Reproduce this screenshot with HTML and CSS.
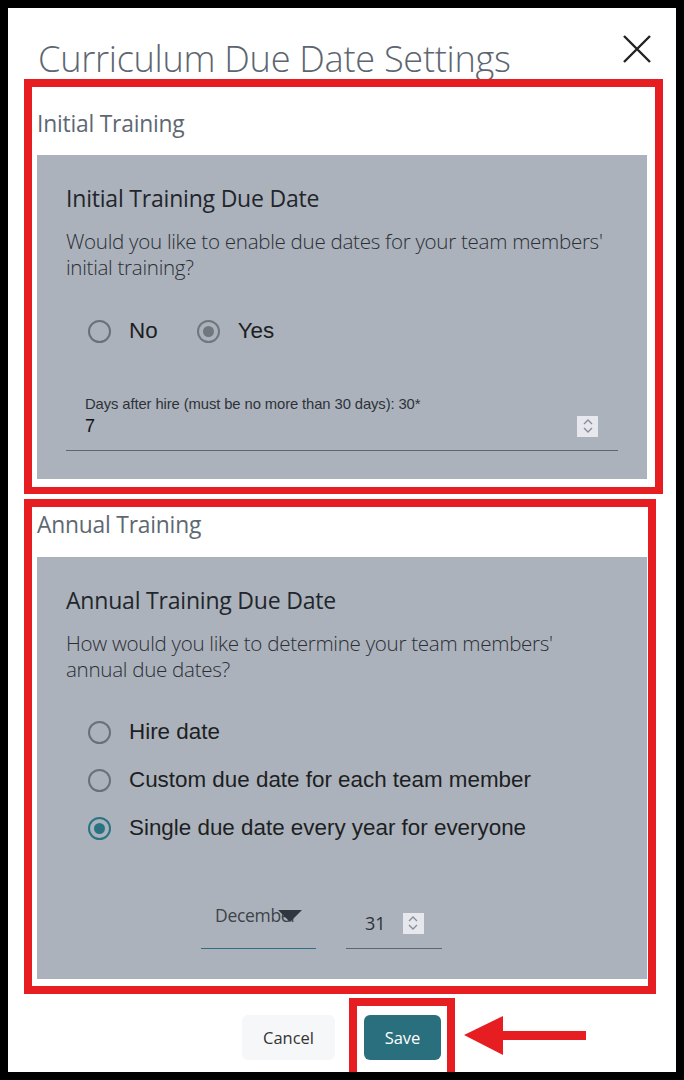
FILE: index.html
```html
<!DOCTYPE html>
<html>
<head>
<meta charset="utf-8">
<link rel="stylesheet" href="styles.css">
</head>
<body>
<div class="dialog">
  <div class="header">
    <h1 class="title">Curriculum Due Date Settings</h1>
    <svg class="close" width="30" height="30" viewBox="0 0 30 30"><path d="M2 2 L28 28 M28 2 L2 28" stroke="#222" stroke-width="2.4" fill="none"/></svg>
  </div>

  <div class="mark mark-one">
    <div class="section-label">Initial Training</div>
    <div class="panel panel-one">
      <h2 class="panel-title">Initial Training Due Date</h2>
      <p class="question">Would you like to enable due dates for your team members'<br>initial training?</p>
      <div class="radio-row">
        <label class="radio"><span class="dot"></span><span class="rlabel">No</span></label>
        <label class="radio"><span class="dot checked-gray"></span><span class="rlabel">Yes</span></label>
      </div>
      <div class="field">
        <div class="field-label">Days after hire (must be no more than 30 days): 30*</div>
        <div class="field-row">
          <span class="field-value">7</span>
          <span class="spin"><svg width="12" height="16" viewBox="0 0 12 16"><path d="M2 6 L6 2 L10 6 M2 10 L6 14 L10 10" stroke="#8a8d9a" stroke-width="1.4" fill="none"/></svg></span>
        </div>
      </div>
    </div>
  </div>

  <div class="mark mark-two">
    <div class="section-label">Annual Training</div>
    <div class="panel panel-two">
      <h2 class="panel-title">Annual Training Due Date</h2>
      <p class="question">How would you like to determine your team members'<br>annual due dates?</p>
      <div class="radio-col">
        <label class="radio"><span class="dot"></span><span class="rlabel">Hire date</span></label>
        <label class="radio"><span class="dot"></span><span class="rlabel">Custom due date for each team member</span></label>
        <label class="radio"><span class="dot checked-teal"></span><span class="rlabel">Single due date every year for everyone</span></label>
      </div>
      <div class="date-row">
        <div class="select">
          <span class="select-text">December</span>
          <span class="caret"></span>
        </div>
        <div class="day">
          <span class="day-value">31</span>
          <span class="spin"><svg width="12" height="16" viewBox="0 0 12 16"><path d="M2 6 L6 2 L10 6 M2 10 L6 14 L10 10" stroke="#8a8d9a" stroke-width="1.4" fill="none"/></svg></span>
        </div>
      </div>
    </div>
  </div>

  <div class="footer">
    <button class="btn cancel">Cancel</button>
    <div class="save-mark"><button class="btn save">Save</button></div>
    <svg class="arrow" width="122" height="40" viewBox="0 0 122 40"><polygon points="0,19 39,0 39,15 122,15 122,24 39,24 39,39" fill="#e61e22"/></svg>
  </div>
</div>
</body>
</html>
```

FILE: styles.css
```css
* { box-sizing: border-box; }
html, body { margin: 0; padding: 0; }
body {
  background: #000;
  padding: 8px;
  width: 684px;
  height: 1080px;
  font-family: "Open Sans", "Liberation Sans", sans-serif;
}
.dialog {
  background: #fff;
  width: 668px;
  height: 1064px;
  padding: 0 0 0 16px;
  display: flex;
  flex-direction: column;
}
.header {
  display: flex;
  justify-content: space-between;
  align-items: flex-start;
  height: 71px;
  padding-left: 14px;
  padding-right: 24px;
}
.title {
  margin: 0;
  margin-top: 26px;
  font-weight: 300;
  font-size: 36.2px;
  line-height: 48px;
  color: #5d6670;
  letter-spacing: -0.3px;
}
.close { margin-top: 26px; }

.mark {
  border: 8px solid #e61e22;
  padding-left: 5px;
}
.mark-one {
  width: 639px;
  padding-bottom: 8px;
  border-bottom-width: 7px;
}
.mark-two {
  width: 632px;
  margin-top: 5px;
  padding-bottom: 7px;
}
.section-label {
  font-size: 22.8px;
  color: #5e6872;
  font-weight: 400;
  letter-spacing: -0.2px;
}
.mark-one .section-label { height: 68px; padding-top: 22px; line-height: 30px; }
.mark-two .section-label { height: 50px; padding-top: 3px; line-height: 30px; }

.panel {
  width: 610px;
  background: #abb2bc;
  padding: 28px 0 0 29px;
}
.panel-one { height: 324px; }
.panel-two { height: 422px; }
.panel-title {
  margin: 0;
  font-size: 23px;
  font-weight: 400;
  line-height: 30px;
  color: #22262b;
  letter-spacing: -0.2px;
}
.question {
  margin: 15px 0 0;
  font-size: 20.6px;
  font-weight: 300;
  line-height: 26px;
  color: #2b2f35;
  letter-spacing: -0.3px;
  white-space: nowrap;
}
.radio {
  display: flex;
  align-items: center;
  gap: 18px;
  font-family: "Liberation Sans", Arial, sans-serif;
  font-size: 22.4px;
  color: #1d1f22;
  height: 24px;
}
.dot {
  width: 23px;
  height: 23px;
  border-radius: 50%;
  border: 2px solid #6b6f76;
  display: flex;
  align-items: center;
  justify-content: center;
  flex-shrink: 0;
}
.checked-gray { border-color: #72767d; }
.checked-gray::after {
  content: "";
  width: 11px; height: 11px; border-radius: 50%;
  background: #72767d;
}
.checked-teal { border-color: #2a7383; }
.checked-teal::after {
  content: "";
  width: 11px; height: 11px; border-radius: 50%;
  background: #2a7383;
}
.radio-row {
  display: flex;
  gap: 39px;
  margin: 39px 0 0 22px;
}
.field {
  margin-top: 53px;
  width: 552px;
  border-bottom: 1.5px solid #60646c;
  padding: 0 20px 0 19px;
  height: 55px;
}
.field-label {
  font-family: "Liberation Sans", Arial, sans-serif;
  font-size: 14.8px;
  color: #2e3238;
  line-height: 16px;
  letter-spacing: -0.1px;
}
.field-row {
  display: flex;
  justify-content: space-between;
  align-items: center;
  margin-top: 3px;
}
.field-value {
  font-family: "Liberation Sans", Arial, sans-serif;
  font-size: 18px;
  color: #111;
  line-height: 22px;
}
.spin {
  width: 21px;
  height: 21px;
  background: #e7e7ee;
  display: flex;
  align-items: center;
  justify-content: center;
}
.radio-col {
  display: flex;
  flex-direction: column;
  gap: 24px;
  margin: 38px 0 0 22px;
}
.date-row {
  display: flex;
  margin: 61px 0 0 135px;
  gap: 30px;
  align-items: flex-end;
}
.select {
  width: 115px;
  height: 48px;
  border-bottom: 1.5px solid #2f6f80;
  position: relative;
  padding: 2px 0 0 14px;
}
.select-text {
  font-size: 17.5px;
  color: #3e4349;
  letter-spacing: -0.3px;
}
.caret {
  position: absolute;
  left: 77px;
  top: 9px;
  width: 0; height: 0;
  border-left: 12px solid transparent;
  border-right: 12px solid transparent;
  border-top: 12px solid #32373f;
}
.day {
  width: 96px;
  height: 48px;
  border-bottom: 1.5px solid #60646c;
  display: flex;
  align-items: center;
  padding: 0 0 3px 19px;
  gap: 17px;
}
.day-value {
  font-size: 18px;
  color: #2e3238;
}
.footer {
  display: flex;
  align-items: center;
  margin-top: 4px;
  padding-left: 218px;
}
.btn {
  font-family: "Open Sans", "Liberation Sans", sans-serif;
  font-size: 16.5px;
  border: none;
  border-radius: 6px;
  height: 45px;
}
.cancel {
  width: 93px;
  background: #f6f7f9;
  color: #333;
  margin-top: 4px;
}
.save-mark {
  margin-left: 14px;
  border: 8px solid #e61e22;
  border-bottom: none;
  width: 106px;
  height: 74px;
  padding: 9px 0 0 7px;
}
.save {
  width: 77px;
  background: #2a6f7e;
  color: #fff;
}
.arrow { margin-left: 9px; margin-top: 2px; }
```
